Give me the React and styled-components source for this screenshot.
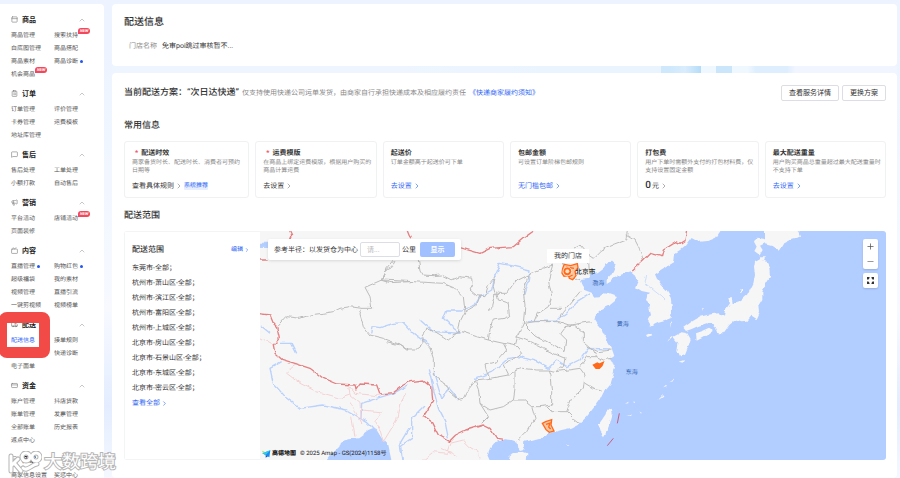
import React, { useState } from "react"
import styled, { createGlobalStyle, css } from "styled-components"
import { PanelTop, ClipboardList, MessageSquare, Megaphone, Tv, Truck, CreditCard, Store, ChevronUp, ChevronRight, Plus, Minus } from "lucide-react"

const menu = [
    {
        title: "商品", Icon: PanelTop, items: [
            { name: "商品管理" }, { name: "搜索扶持", isNew: true },
            { name: "白底图管理" }, { name: "商品搭配" },
            { name: "商品素材" }, { name: "商品诊断", dot: true },
            { name: "机会商品", isNew: true },
        ]
    },
    {
        title: "订单", Icon: ClipboardList, items: [
            { name: "订单管理" }, { name: "评价管理" },
            { name: "卡券管理" }, { name: "运费模板" },
            { name: "地址库管理" },
        ]
    },
    {
        title: "售后", Icon: MessageSquare, items: [
            { name: "售后处理" }, { name: "工单处理" },
            { name: "小额打款" }, { name: "自动售后" },
        ]
    },
    {
        title: "营销", Icon: Megaphone, items: [
            { name: "平台活动" }, { name: "店铺活动", isNew: true },
            { name: "页面装修" },
        ]
    },
    {
        title: "内容", Icon: Tv, items: [
            { name: "直播管理", dot: true }, { name: "购物红包", dot: true },
            { name: "超级福袋" }, { name: "我的素材" },
            { name: "视频管理" }, { name: "直播引流" },
            { name: "一键剪视频" }, { name: "视频榜单" },
        ]
    },
    {
        title: "配送", Icon: Truck, marked: true, items: [
            { name: "配送信息", active: true }, { name: "接单规则" },
            { name: "" }, { name: "快递诊断" },
            { name: "电子面单" },
        ]
    },
    {
        title: "资金", Icon: CreditCard, items: [
            { name: "账户管理" }, { name: "抖店贷款" },
            { name: "账单管理" }, { name: "发票管理" },
            { name: "全部账单" }, { name: "历史报表" },
            { name: "返点中心" },
        ]
    },
    {
        title: "商家", Icon: Store, items: [
            { name: "商家信息设置" }, { name: "奖惩中心" },
        ]
    },
]

const cards = [
    { title: "配送时效", required: true, text: "商家备货时长、配送时长、消费者可预约日期等", action: "查看具体规则", tag: "系统推荐" },
    { title: "运费模版", required: true, text: "在商品上绑定运费模版，根据用户购买的商品计算运费", action: "去设置" },
    { title: "起送价", text: "订单金额高于起送价可下单", action: "去设置", blue: true },
    { title: "包邮金额", text: "可设置订单阶梯包邮规则", action: "无门槛包邮", blue: true },
    { title: "打包费", text: "用户下单时需额外支付的打包材料费，仅支持设置固定金额", value: "0", action: "元" },
    { title: "最大配送重量", text: "用户购买商品总重量超过最大配送重量时不支持下单", action: "去设置", blue: true },
]

const areas = [
    "东莞市-全部；",
    "杭州市-萧山区-全部；",
    "杭州市-滨江区-全部；",
    "杭州市-富阳区-全部；",
    "杭州市-上城区-全部；",
    "北京市-房山区-全部；",
    "北京市-石景山区-全部；",
    "北京市-东城区-全部；",
    "北京市-密云区-全部；",
]

export default function App() {
    return (
        <>
            <GlobalStyle />
            <Page>
                <Sidebar />
                <Main>
                    <Panel>
                        <PageTitle>配送信息</PageTitle>
                        <ShopRow>
                            <dt>门店名称</dt>
                            <dd>免审poi跳过审核暂不...</dd>
                        </ShopRow>
                    </Panel>
                    <Band />
                    <Panel $grow>
                        <PlanRow>
                            <PlanName>当前配送方案：“次日达快递”</PlanName>
                            <PlanText>仅支持使用快递公司运单发货，由商家自行承担快递成本及相应履约责任</PlanText>
                            <Link href="#rules">《快递商家履约须知》</Link>
                            <Buttons>
                                <Button type="button">查看服务详情</Button>
                                <Button type="button">更换方案</Button>
                            </Buttons>
                        </PlanRow>
                        <SectionTitle>常用信息</SectionTitle>
                        <Cards>
                            {cards.map((card) => <InfoCard key={card.title} {...card} />)}
                        </Cards>
                        <SectionTitle>配送范围</SectionTitle>
                        <Range>
                            <AreaPanel>
                                <AreaHead>
                                    <h3>配送范围</h3>
                                    <Link $small href="#edit">编辑<ChevronRight size={6} /></Link>
                                </AreaHead>
                                <AreaList>
                                    {areas.map((area) => <li key={area}>{area}</li>)}
                                </AreaList>
                                <Link href="#all">查看全部<ChevronRight size={7} /></Link>
                            </AreaPanel>
                            <DeliveryMap />
                        </Range>
                    </Panel>
                </Main>
                <Watermark />
            </Page>
        </>
    )
}

function Sidebar() {
    return (
        <Side>
            {menu.map(({ title, Icon, items, marked }) => (
                <Group key={title}>
                    <GroupHead type="button">
                        <Icon size={7} color="#777" />
                        <span>{title}</span>
                        <ChevronUp size={8} color="#aaa" strokeWidth={2} />
                    </GroupHead>
                    <Items>
                        {items.map((item, idx) => (
                            <li key={idx}>
                                {item.name && (
                                    <Item href="#menu" $active={item.active}>
                                        {item.name}
                                        {item.isNew && <NewBadge>NEW</NewBadge>}
                                        {item.dot && <Dot />}
                                    </Item>
                                )}
                            </li>
                        ))}
                    </Items>
                    {marked && <Marker />}
                </Group>
            ))}
        </Side>
    )
}

function InfoCard({ title, required, text, action, value, tag, blue }) {
    return (
        <Card>
            <CardTitle>
                {required && <i>*</i>}
                {title}
            </CardTitle>
            <p>{text}</p>
            <CardFoot>
                <CardLink href="#card" $blue={blue}>
                    {value && <b>{value}</b>}
                    {action}
                    <ChevronRight size={8} color={blue ? "#3a72f8" : "#888"} />
                </CardLink>
                {tag && <Tag>{tag}</Tag>}
            </CardFoot>
        </Card>
    )
}

function DeliveryMap() {
    const [radius, setRadius] = useState("")

    return (
        <MapBox>
            <MapDrawing />
            <RadiusBar>
                <label htmlFor="radius">参考半径：以发货仓为中心</label>
                <input id="radius" placeholder="请..." value={radius} onChange={(e) => setRadius(e.target.value)} />
                <span>公里</span>
                <button type="button">显示</button>
            </RadiusBar>
            <StorePin>我的门店</StorePin>
            <MapTools>
                <ToolGroup>
                    <button type="button" aria-label="放大"><Plus size={9} color="#555" /></button>
                    <button type="button" aria-label="缩小"><Minus size={9} color="#777" /></button>
                </ToolGroup>
                <ToolGroup>
                    <button type="button" aria-label="全屏">
                        <svg width="9" height="9" viewBox="0 0 18 18" fill="#333">
                            <path d="M2 2h5v2L5 7H2zM11 2h5v5h-3l-2-3zM2 11h3l2 3v2H2zM13 11h3v5h-5v-2z" />
                        </svg>
                    </button>
                </ToolGroup>
            </MapTools>
            <MapCredit>
                <svg width="9" height="8" viewBox="0 0 27 24">
                    <path d="M1 10 25 1 22 22 14 17z" fill="#1789f5" />
                    <path d="M1 10 25 1 11 15z" fill="#2ecbe8" />
                    <path d="M0 2 9 6 3 9z" fill="#a5e05a" />
                    <path d="M11 15 18 19 11 23z" fill="#0a56c9" />
                </svg>
                <b>高德地图</b>
                <span>© 2025 Amap - GS(2024)1158号</span>
            </MapCredit>
        </MapBox>
    )
}

function MapDrawing() {
    return (
        <svg viewBox="-360 18 1878 687" preserveAspectRatio="xMinYMin slice" aria-hidden="true">
            <defs>
                <filter id="rough" filterUnits="userSpaceOnUse" x="-380" y="0" width="1920" height="730">
                    <feTurbulence type="fractalNoise" baseFrequency="0.04" numOctaves="2" seed="4" />
                    <feDisplacementMap in="SourceGraphic" scale="14" xChannelSelector="R" yChannelSelector="G" />
                </filter>
            </defs>
            <rect x="-360" y="18" width="1878" height="687" fill="#b2cdff" />

            <g filter="url(#rough)" fill="none" strokeLinejoin="round">
                {/* land */}
                <g fill="#f6f6f6">
                    <path d="M-380 0H1030L1005 38 982 48 960 50 935 36 928 45 915 62 900 75 885 85 882 112 860 125 840 138 825 148 830 160 845 180 860 195 872 215 876 250 872 278 855 285 835 290 810 302 800 285 810 270 805 250 808 235 798 225 803 210 810 203 785 198 768 187 775 172 765 158 757 145 757 137 735 145 715 152 700 162 680 174 680 162 692 150 700 135 707 120 697 110 682 112 670 130 650 145 632 148 625 158 598 162 605 180 615 196 635 203 640 218 655 217 672 205 690 208 714 216 705 228 690 240 665 252 650 265 640 280 650 295 668 315 680 345 695 370 703 393 690 403 705 425 700 450 692 475 670 500 658 525 640 550 620 575 600 595 575 608 545 615 520 622 500 628 480 638 455 645 430 650 428 665 434 674 420 678 412 668 410 650 395 645 375 643 345 652 330 670 322 690 335 720H38L25 660 5 640-10 615-20 612-35 618-65 640-95 643-120 650-125 665-145 685-170 720H-380z" />
                    <path d="M682 560 695 549 698 565 690 595 680 620 672 634 662 620 655 600z" />
                    <path d="M388 695 400 685 425 682 442 688 440 715H385z" />
                    <g transform="translate(660 0)">
                        <path d="M465 108 480 100 498 110 508 130 510 155 498 175 487 200 487 225 478 240 480 260 470 282 455 272 440 290 425 292 405 286 388 300 370 325 355 325 348 305 340 297 320 295 295 303 275 312 258 318 250 308 275 290 300 275 330 268 360 265 372 272 375 256 390 235 385 220 395 215 398 235 420 228 445 205 460 175 465 150 462 125z" />
                        <path d="M495 0H586L600 35 575 42 550 55 538 75 515 60 495 55 480 62 488 75 478 92 462 80 470 65 462 50 470 35 495 40z" />
                        <path d="M288 325 310 317 330 308 342 315 325 328 305 340 290 347zM220 335 245 322 262 325 272 342 265 365 255 390 240 394 232 375 235 355zM138 330 152 324 157 331 142 336zM480 94h14v12h-14zM425 192l4 0 0 10-6 2zM303 247h6l-3 8zM210 290h4l-2 18zM212 332l5 3-18 18z" />
                        <path d="M236 410l16-5-4 8zM208 472l12-8 2 4zM190 490l8-8 3 4zM172 524l16-16 2 4zM72 536l10-6v5zM98 530h7v4zM78 570l16-2v5zM118 562h6v4zM-105 655l10 6-5 2z" />
                    </g>
                </g>

                {/* rivers */}
                <g stroke="#b9d1fd" strokeWidth="4">
                    <path d="M-25 325-20 305 0 308 40 295 70 293 100 325 150 360M120 285 160 320 200 322 240 325 215 305 190 280 200 255 245 255 285 240 300 215 335 195 345 150 360 115 395 122 450 135 445 170 432 210M440 290 530 288 560 265 590 230 630 205" />
                    <path d="M160 440 185 520 205 490 235 525M285 460 340 440 385 400 420 395 470 410 505 430 530 405 560 425 600 405 625 370 690 372M145 430 175 550 195 590 205 640M135 540 95 580 95 640 65 660 70 710" />
                    <g transform="translate(-810 15)">
                        <path d="M515 395 480 415 490 460 530 505 570 535 640 525 710 540 770 575 800 605M753 565 755 520 800 505 850 490 895 465M510 340 545 340 560 370M450 285 480 310M900 590 870 640 880 700" />
                        <path d="M450 40h23v12h-23z" fill="#b2cdff" />
                    </g>
                    <path d="M800 150 795 175 820 195 845 215 855 225" strokeWidth="2" />
                </g>

                {/* province lines */}
                <g stroke="#bcbcbc" strokeWidth="3">
                    <path d="M5 165 15 135 35 125 45 105M115 105 120 135 130 150 160 152 185 150 215 165 240 155 278 160 280 178 270 195 290 212 315 215 325 180 345 155 340 185 345 205 380 205 405 170 445 150 490 130 518 120 505 165 510 190 515 215 505 245 475 265 465 290 430 295" />
                    <path d="M5 165 100 170 190 175 225 190 250 215 255 260 240 290 235 320 205 345 190 335 165 320 140 312 125 335 130 355 105 375 80 375 60 360 20 350M255 260 290 240 300 212M345 205 335 245 325 255M350 200 355 225 385 235 388 270 375 280 340 285 330 310 325 345 290 335 245 320 215 330" />
                    <path d="M325 345 370 355 405 362 412 335 430 295 435 240 430 200 445 150M125 345 150 370 160 400 160 450 190 470 205 500 235 525 250 520 265 490 285 465 330 460 320 440 315 420 350 410 380 375 370 355" />
                    <path d="M405 362 425 385 395 405 370 420 385 450 405 435 430 430 470 435 505 435 530 440 550 425 555 400 520 385 480 365 440 345 410 335M405 435 405 490 400 525 430 525 455 545 480 545 515 540 515 500 510 450 505 435" />
                    <path d="M285 465 295 490 300 535 330 555 370 545 400 525M330 460 385 450M300 535 325 575 305 595M455 545 465 580 440 620 415 645M530 440 600 430 615 450 610 490 575 520 560 560 515 560 500 545M560 560 580 580 600 595M615 475 640 490 665 495" />
                    <path d="M430 295 465 330 510 355 555 380 560 345 540 325 555 305 580 300 610 325 610 350 640 375 650 395 620 395 600 425M465 290 540 290 570 300 635 290M540 280 550 260 600 200M510 250 545 250M650 395 670 405 695 400M620 365 655 380 695 375" />
                    <path d="M580 70 600 60 625 90 640 100 665 75 700 60 740 45 745 20M740 30 765 45 778 70 790 105M625 90 628 145M555 130 545 105M575 165 600 160M580 145 595 130" />
                    <g transform="translate(-810 15)">
                        <path d="M505 288 530 260 570 265 600 255 640 250 670 245 690 235 720 230 755 235 750 255 760 290 780 315 820 325 860 340 895 360M755 235 785 235 780 200 765 172 815 150 825 120 850 90M815 150 840 158 900 155" />
                    </g>
                </g>

                {/* neighbouring borders */}
                <g stroke="#f5d2d4" strokeWidth="3">
                    <path transform="translate(-810 15)" d="M560 400 545 410 530 430 570 460 620 485 690 505 720 495 715 465 735 490 800 497 830 490M720 495 750 520 755 580 720 520M755 540 815 545 795 575 810 600 820 635 860 570 870 520 890 490M725 560 735 620M450 322 490 345" />
                    <path d="M130 705 160 680 200 685 210 655 250 645 270 665 295 680 300 700M185 670 230 690" />
                </g>
                <g stroke="#e57f81" strokeWidth="4">
                    <path transform="translate(-810 15)" d="M440 250 480 255 490 280 500 290 508 325 490 345 495 370 515 388 555 400 600 415 640 445 680 462 735 465 738 480 750 462 800 465 810 492 850 488 880 465 900 455M538 0 545 15 535 40M450 90h26" />
                    <path d="M90 470 130 465 155 485 158 530 130 575 155 590 175 630 210 650 230 630 260 615 310 600 330 610 350 640 370 643M83 10 95 40M230 65 300 85 330 70 400 65 430 40 465 15M757 135 790 105 810 85 845 95 850 75 890 50 900 55 915 45 920 15" />
                </g>
            </g>
            <path d="M718 565 712 595M700 640 682 662" stroke="#c9607d" strokeWidth="3" />

            {/* delivery areas */}
            <g fill="#ffc7a0" stroke="#ff6a1a" strokeWidth="4">
                <path d="M553 118 572 122 592 116 594 128 585 140 588 152 578 164 568 160 566 152 552 154 546 144 548 130z" />
                <path d="M487 595 497 590 515 584 513 600 522 618 508 622 498 614z" />
                <path d="M498 598 510 594 506 606 512 612M558 126 582 130M566 156 578 150" fill="none" />
                <path d="M640 420 652 414 658 417 670 412 666 422 658 430 648 430z" fill="#ff6a1a" />
            </g>
            <circle cx="562" cy="139" r="13" fill="#ff6a1a" stroke="#fff" strokeWidth="2" />
            <circle cx="562" cy="139" r="6" fill="#ffe2cc" />

            <MapText x="586" y="148" $city>北京市</MapText>
            <MapText x="637" y="181">渤海</MapText>
            <MapText x="710" y="304">黄海</MapText>
            <MapText x="737" y="448">东海</MapText>
        </svg>
    )
}

function Watermark() {
    return (
        <Mark>
            <svg width="34" height="24" viewBox="0 0 34 24" fill="none" aria-hidden="true">
                <g stroke="#b5b5b5" strokeWidth="5" strokeLinecap="round">
                    <path d="M3 5v15M4 14 10 8M7 13l6 7" />
                    <circle cx="18" cy="6" r="4" />
                    <circle cx="28" cy="6" r="4" />
                    <path d="M15 17c4 4 8-3 14-4" />
                </g>
                <g stroke="#fff" strokeWidth="3" strokeLinecap="round">
                    <path d="M3 5v15M4 14 10 8M7 13l6 7" />
                    <circle cx="18" cy="6" r="4" />
                    <circle cx="28" cy="6" r="4" />
                    <path d="M15 17c4 4 8-3 14-4" />
                </g>
            </svg>
            <span>大数跨境</span>
        </Mark>
    )
}

const GlobalStyle = createGlobalStyle`
    *{
        box-sizing: border-box;
    }

    body{
        margin: 0;
        background: #edf3ff;
        color: #333;
        font-family: Roboto, "Noto Sans CJK SC", sans-serif;
        font-size: 7px;
        line-height: 12px;
        text-rendering: geometricPrecision;
    }

    h1, h2, h3, p, ul, dl, dd{
        margin: 0;
        padding: 0;
    }

    ul{
        list-style: none;
    }

    a{
        text-decoration: none;
    }

    button, input{
        font: inherit;
        color: inherit;
        margin: 0;
    }
`

const Page = styled.div`
    position: relative;
    display: grid;
    grid-template-columns: 104px 1fr;
    gap: 8px;
    height: 100vh;
    padding: 4px 3px 0 0;
    overflow: hidden;
    background: linear-gradient(180deg, #edf3ff 0%, #f0f6ff 30%, #f7f9ff 65%, #e3edff 85%, #f5f8ff 100%);
`

const Side = styled.nav`
    display: flex;
    flex-direction: column;
    gap: 5px;
    min-height: 0;
    padding: 8px 18px 0 11px;
    background: #fff;
    border-radius: 0 4px 0 0;
`

const Group = styled.section`
    position: relative;
    display: grid;
    gap: 2px;
`

const GroupHead = styled.button`
    display: flex;
    align-items: center;
    gap: 4px;
    height: 15px;
    padding: 0;
    border: 0;
    background: none;
    color: #222;
    font-weight: 700;

    span{
        flex: 1;
        text-align: left;
    }
`

const Items = styled.ul`
    display: grid;
    grid-template-columns: 43px 1fr;

    li{
        height: 13px;
    }
`

const Item = styled.a`
    position: relative;
    display: inline-block;
    color: ${({ $active }) => $active ? '#2f66f6' : '#555'};
    font-size: 6px;
    line-height: 13px;
    white-space: nowrap;
    vertical-align: top;
`

const NewBadge = styled.span`
    position: absolute;
    left: 100%;
    top: -1px;
    padding: 0 2px;
    border-radius: 3px 3px 3px 0;
    background: #f5475b;
    color: #fff;
    font-size: 4px;
    font-style: italic;
    font-weight: 700;
    line-height: 6px;
`

const Dot = styled.span`
    position: absolute;
    left: calc(100% + 2px);
    top: 5px;
    width: 3px;
    height: 3px;
    border-radius: 50%;
    background: #2456f0;
`

const Marker = styled.div`
    position: absolute;
    left: -12px;
    top: -5px;
    width: 51px;
    height: 46px;
    border: solid #f24a46;
    border-width: 11px 11px 11px 8px;
    border-radius: 8px;
    pointer-events: none;
`

const Main = styled.main`
    display: flex;
    flex-direction: column;
    min-width: 0;
`

const Panel = styled.section`
    flex: ${({ $grow }) => $grow ? '1 0 auto' : 'none'};
    padding: 12px 11px 14px 12px;
    border-radius: 4px;
    background: #fff;
`

const Band = styled.div`
    height: 7px;
    background: linear-gradient(90deg,
        #eef5ff 0 35%, #eaf4ff 55% 70%, #cfe8fc 70% 71%, #d9edfd 73%, #b6dcf8 75%,
        #eff7ff 75% 77%, #cbe5fb 77% 79%, #eff7ff 79% 81%, #deeefe 82% 86%, #f0f5ff 87%);
`

const PageTitle = styled.h1`
    font-size: 10px;
    font-weight: 500;
    line-height: 14px;
`

const ShopRow = styled.dl`
    display: flex;
    gap: 5px;
    margin-top: 10px;
    padding-left: 5px;

    dt{
        color: #888;
    }
`

const PlanRow = styled.div`
    display: flex;
    align-items: center;
    gap: 3px;
    height: 16px;
    margin-bottom: 18px;
    white-space: nowrap;
`

const PlanName = styled.h2`
    font-size: 9px;
    font-weight: 500;
`

const PlanText = styled.span`
    color: #888;
`

const Link = styled.a`
    display: inline-flex;
    align-items: center;
    gap: 1px;
    color: #2f66f6;
    font-size: ${({ $small }) => $small ? 6 : 7}px;
    line-height: 15px;
`

const Buttons = styled.div`
    display: flex;
    gap: 3px;
    margin-left: auto;
`

const Button = styled.button`
    height: 16px;
    padding: 0 7px;
    border: 1px solid #dcdee3;
    border-radius: 2px;
    background: #fff;
`

const SectionTitle = styled.h2`
    margin: 11px 0 8px;
    font-size: 9px;
    font-weight: 500;
    line-height: 14px;
`

const Cards = styled.div`
    display: grid;
    grid-template-columns: 31fr repeat(5, 30fr);
    gap: 6px;
`

const Card = styled.article`
    padding: 6px 4px 5px 7px;
    border: 1px solid #f0f1f3;
    border-radius: 3px;

    p{
        min-height: 16px;
        color: #888;
        font-size: 6px;
        line-height: 8px;
    }
`

const CardTitle = styled.h3`
    display: flex;
    gap: 3px;
    font-size: 7px;
    font-weight: 700;
    line-height: 11px;

    i{
        padding-left: 3px;
        color: #f5475b;
        font-style: normal;
    }
`

const CardFoot = styled.div`
    display: flex;
    align-items: center;
    gap: 1px;
    height: 12px;
    margin-top: 5px;
`

const CardLink = styled.a`
    display: inline-flex;
    align-items: center;
    gap: 1px;
    color: #333;

    b{
        font-size: 10px;
        font-weight: 500;
    }

    ${({ $blue }) => $blue && css`
        color: #2f66f6;
    `}
`

const Tag = styled.span`
    border-radius: 1px;
    background: #e6eeff;
    color: #2f66f6;
    font-size: 6px;
    line-height: 8px;
`

const Range = styled.div`
    display: grid;
    grid-template-columns: 136px 1fr;
    min-height: 229px;
    overflow: hidden;
    border-radius: 3px;
`

const AreaPanel = styled.div`
    padding: 10px 10px 10px 7px;
    border: 1px solid #f3f4f6;
    border-right: 0;
`

const AreaHead = styled.div`
    display: flex;
    align-items: center;
    justify-content: space-between;
    margin-bottom: 4px;

    h3{
        font-size: 8px;
        font-weight: 500;
        line-height: 14px;
    }
`

const AreaList = styled.ul`
    line-height: 15px;
`

const MapBox = styled.div`
    position: relative;
    overflow: hidden;

    > svg{
        position: absolute;
        inset: 0;
        width: 100%;
        height: 100%;
    }
`

const MapText = styled.text`
    fill: ${({ $city }) => $city ? '#222' : '#2d5fae'};
    font-size: ${({ $city }) => $city ? 20 : 18}px;
    font-weight: ${({ $city }) => $city ? 500 : 400};
`

const RadiusBar = styled.div`
    position: absolute;
    left: 8px;
    top: 8px;
    display: flex;
    align-items: center;
    gap: 2px;
    padding: 3px 6px;
    border-radius: 2px;
    background: #fff;
    box-shadow: 0 1px 3px rgba(0, 0, 0, 0.12);
    white-space: nowrap;

    input{
        width: 40px;
        height: 15px;
        padding: 0 6px;
        border: 1px solid #dcdee3;
        border-radius: 2px;
        outline: none;
    }

    input::placeholder{
        color: #bbb;
    }

    button{
        width: 35px;
        height: 15px;
        margin-left: 2px;
        padding: 0;
        border: 0;
        border-radius: 2px;
        background: #a0c0ff;
        color: #fff;
        font-weight: 700;
    }
`

const StorePin = styled.div`
    position: absolute;
    left: 287px;
    top: 18px;
    padding: 1px 7px;
    background: #fff;
`

const MapTools = styled.div`
    position: absolute;
    right: 8px;
    top: 8px;
    display: grid;
    gap: 4px;
`

const ToolGroup = styled.div`
    display: grid;
    border-radius: 2px;
    background: #fff;
    box-shadow: 0 1px 2px rgba(0, 0, 0, 0.15);

    button{
        display: flex;
        align-items: center;
        justify-content: center;
        width: 15px;
        height: 15px;
        padding: 0;
        border: 0;
        background: none;
    }
`

const MapCredit = styled.div`
    position: absolute;
    left: 2px;
    bottom: 0;
    display: flex;
    align-items: center;
    gap: 1px;
    color: #222;
    font-size: 6px;

    b{
        margin-right: 3px;
        font-size: 6px;
        font-weight: 900;
    }
`

const Mark = styled.div`
    position: absolute;
    left: 8px;
    bottom: 3px;
    display: flex;
    align-items: center;
    gap: 2px;
    color: #fff;
    font-size: 18px;
    line-height: 24px;
    pointer-events: none;

    span{
        -webkit-text-stroke: 2px #b5b5b5;
        paint-order: stroke fill;
    }
`
